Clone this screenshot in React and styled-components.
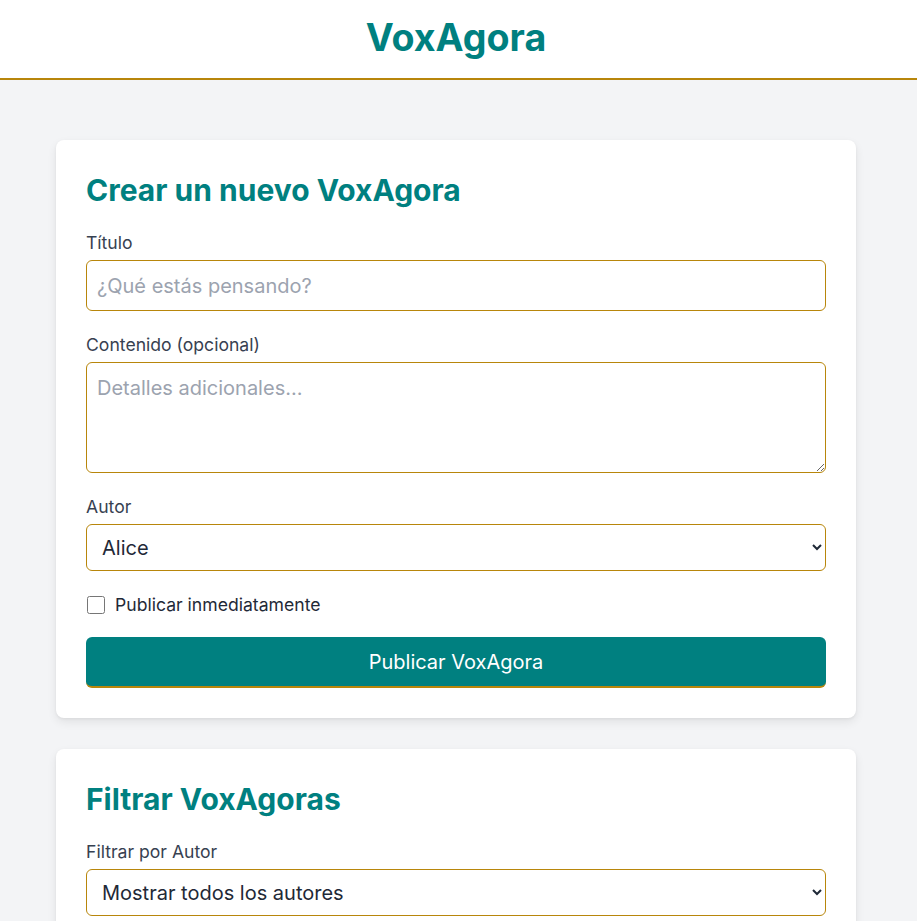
import React from "react";
import styled, { createGlobalStyle } from "styled-components";

const Global = createGlobalStyle`
  * { box-sizing: border-box; }
  html, body { margin: 0; padding: 0; }
  body {
    background: #f3f4f6;
    font-family: Inter, "Noto Sans", sans-serif;
    color: #1f2937;
    line-height: 1.5;
  }
`;

const Header = styled.header`
  background: #ffffff;
  border-bottom: 2px solid #b8860b;
  padding: 15px 5px 18px 0;
  text-align: center;
`;

const Brand = styled.h1`
  margin: 0;
  font-size: 37.6px;
  line-height: 45px;
  font-weight: 700;
  color: #008080;
`;

const Page = styled.div`
  padding: 60px 5px 0 0;
`;

const Main = styled.main`
  max-width: 800px;
  margin: 0 auto;
  display: flex;
  flex-direction: column;
  gap: 31px;
`;

const Card = styled.section`
  background: #ffffff;
  border-radius: 8px;
  box-shadow: 0 4px 10px rgba(0, 0, 0, 0.08), 0 1px 3px rgba(0, 0, 0, 0.05);
  padding: 30px;
`;

const CardTitle = styled.h2`
  margin: 0 0 20px;
  font-size: 30px;
  line-height: 40px;
  font-weight: 700;
  color: #008080;
`;

const Field = styled.div`
  display: flex;
  flex-direction: column;
  margin-bottom: ${(p) => (p.$last ? 0 : 21)}px;
`;

const Label = styled.label`
  font-size: 17.6px;
  line-height: 26px;
  color: #374151;
  margin-bottom: 4px;
`;

const controlBase = `
  display: block;
  width: 100%;
  border: 1px solid #b8860b;
  border-radius: 6px;
  font-family: Inter, "Noto Sans", sans-serif;
  font-size: 20px;
  color: #1f2937;
  background: #ffffff;
  outline: none;
  &::placeholder { color: #9ca3af; }
`;

const TextInput = styled.input`
  ${controlBase}
  height: 51px;
  padding: 10px;
`;

const TextArea = styled.textarea`
  ${controlBase}
  height: 111px;
  padding: 10px;
  line-height: 1.5;
  resize: vertical;
`;

const Select = styled.select`
  ${controlBase}
  height: 47px;
  padding: 0 10px 0 11px;
`;

const CheckRow = styled.label`
  display: flex;
  align-items: center;
  gap: 10px;
  height: 26px;
  margin-bottom: 19px;
  font-size: 17.6px;
  color: #1f2937;
  cursor: pointer;
`;

const Check = styled.input`
  width: 18px;
  height: 18px;
  margin: 0 0 0 1px;
`;

const Button = styled.button`
  display: block;
  width: 100%;
  height: 51px;
  border: none;
  border-bottom: 2px solid #b8860b;
  border-radius: 6px;
  background: #008080;
  color: #ffffff;
  font-family: Inter, "Noto Sans", sans-serif;
  font-size: 20px;
  cursor: pointer;
`;

export default function App() {
  return (
    <>
      <Global />
      <Header>
        <Brand>VoxAgora</Brand>
      </Header>
      <Page>
        <Main>
          <Card>
            <CardTitle>Crear un nuevo VoxAgora</CardTitle>
            <Field>
              <Label htmlFor="titulo">Título</Label>
              <TextInput id="titulo" type="text" placeholder="¿Qué estás pensando?" />
            </Field>
            <Field>
              <Label htmlFor="contenido">Contenido (opcional)</Label>
              <TextArea id="contenido" placeholder="Detalles adicionales..." />
            </Field>
            <Field>
              <Label htmlFor="autor">Autor</Label>
              <Select id="autor" defaultValue="Alice">
                <option>Alice</option>
                <option>Bob</option>
                <option>Carol</option>
              </Select>
            </Field>
            <CheckRow>
              <Check type="checkbox" />
              Publicar inmediatamente
            </CheckRow>
            <Button type="button">Publicar VoxAgora</Button>
          </Card>
          <Card>
            <CardTitle>Filtrar VoxAgoras</CardTitle>
            <Field $last>
              <Label htmlFor="filtro">Filtrar por Autor</Label>
              <Select id="filtro" defaultValue="all">
                <option value="all">Mostrar todos los autores</option>
                <option>Alice</option>
                <option>Bob</option>
                <option>Carol</option>
              </Select>
            </Field>
          </Card>
        </Main>
      </Page>
    </>
  );
}
